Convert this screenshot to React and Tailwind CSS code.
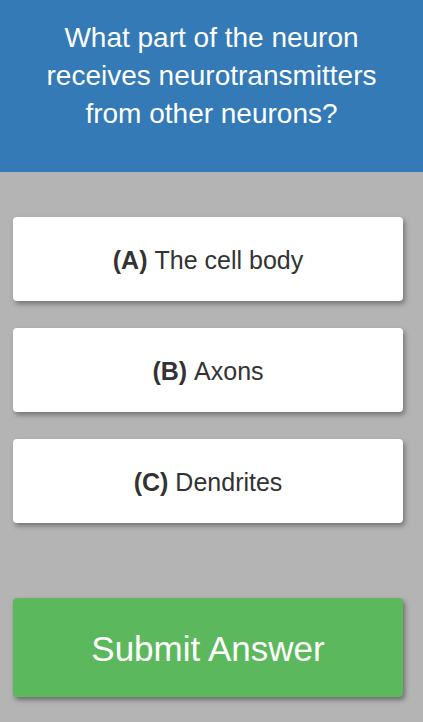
import React from "react";

const options = [
  { key: "A", text: "The cell body" },
  { key: "B", text: "Axons" },
  { key: "C", text: "Dendrites" },
];

export default function App() {
  return (
    <div
      className="w-[423px] h-[722px] bg-[#b4b4b4] flex flex-col"
      style={{ fontFamily: '"Liberation Sans", Arial, sans-serif' }}
    >
      {/* Question */}
      <div className="h-[172px] bg-[#337ab7] pt-[19px] px-4 text-center text-white text-[28px] leading-[38px]">
        What part of the neuron
        <br />
        receives neurotransmitters
        <br />
        from other neurons?
      </div>

      {/* Options */}
      <div className="flex flex-col gap-[27px] pl-[13px] pr-[20px] mt-[45px]">
        {options.map((opt) => (
          <button
            key={opt.key}
            className="h-[84px] w-full bg-white rounded-[4px] shadow-[2px_3px_5px_rgba(0,0,0,0.35)] flex items-center justify-center pt-[3px] text-[25px] text-[#333]"
          >
            <span className="font-bold">({opt.key})</span>
            <span className="ml-[7px]">{opt.text}</span>
          </button>
        ))}
      </div>

      {/* Submit */}
      <div className="pl-[13px] pr-[20px] mt-[75px]">
        <button className="h-[99px] w-full bg-[#5cb85c] rounded-[4px] shadow-[2px_3px_5px_rgba(0,0,0,0.4)] flex items-center justify-center pt-[3px] text-white text-[35px]">
          Submit Answer
        </button>
      </div>
    </div>
  );
}
